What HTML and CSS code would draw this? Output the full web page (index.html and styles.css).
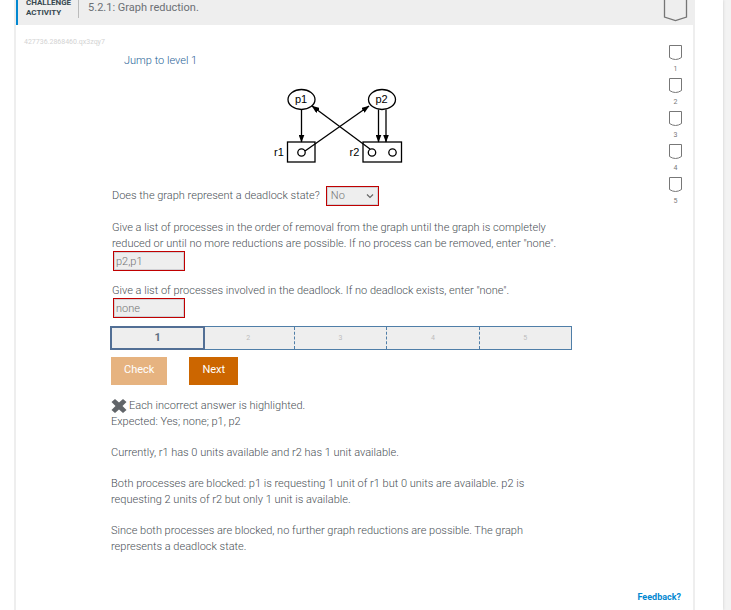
FILE: index.html
```html
<!DOCTYPE html>
<html lang="en">
<head>
<meta charset="utf-8">
<meta name="viewport" content="width=device-width, initial-scale=1">
<title>5.2.1: Graph reduction</title>
<link rel="stylesheet" href="styles.css">
</head>
<body>
<div class="page">
  <main class="card">
    <header class="card-header">
      <div class="kind">CHALLENGE<br>ACTIVITY</div>
      <h1 class="title">5.2.1: Graph reduction.</h1>
      <svg class="header-badge" width="25" height="22" viewBox="0 0 25 22" aria-hidden="true">
        <path d="M1.500 0V17L12.500 20.500L23.500 17V0" fill="#eee" stroke="#757575" stroke-width="1.300"/>
      </svg>
    </header>
    <div class="card-body">
      <section class="activity">
        <div class="activity-id">427736.2868460.qx3zqy7</div>
        <a class="jump" href="#level-1">Jump to level 1</a>
        <svg class="graph" width="132" height="80" viewBox="0 0 132 80" role="img" aria-label="Resource allocation graph">
          <defs>
            <marker id="arrow" viewBox="0 0 8 6" refX="7.500" refY="3" markerWidth="8" markerHeight="6" markerUnits="userSpaceOnUse" orient="auto"><path d="M0 0L8 3L0 6Z"/></marker>
          </defs>
          <g fill="none" stroke="#000" stroke-width="1.300">
            <ellipse cx="29.500" cy="13.500" rx="13.500" ry="10"/>
            <ellipse cx="110" cy="13.500" rx="13.500" ry="10"/>
            <rect x="15.500" y="56" width="27.500" height="20"/>
            <rect x="91" y="56" width="38.500" height="20"/>
            <circle cx="29.500" cy="66.500" r="3.700"/>
            <circle cx="100" cy="66.500" r="3.700"/>
            <circle cx="120.500" cy="66.500" r="3.700"/>
            <g marker-end="url(#arrow)">
              <path d="M29.500 23.500V56"/>
              <path d="M106.500 23.500V56"/>
              <path d="M114 23.500V56"/>
              <path d="M33 65L97 20"/>
              <path d="M98 63L40 20"/>
            </g>
          </g>
          <g class="graph-text">
            <text x="23" y="17">p1</text>
            <text x="103.500" y="17">p2</text>
            <text x="2" y="70">r1</text>
            <text x="77.500" y="70">r2</text>
          </g>
        </svg>
        <form class="questions">
          <div class="question-row">
            <label for="deadlock">Does the graph represent a deadlock state?</label>
            <span class="select-wrap">
              <select id="deadlock" disabled><option>No</option><option>Yes</option></select>
              <svg class="chevron" width="8" height="6" viewBox="0 0 8 6" aria-hidden="true"><path d="M1 1.500L4 4.500L7 1.500" fill="none" stroke="#666" stroke-width="1.200"/></svg>
            </span>
          </div>
          <div class="question">
            <label for="removal">Give a list of processes in the order of removal from the graph until the graph is completely reduced or until no more reductions are possible. If no process can be removed, enter "none".</label>
            <input id="removal" type="text" value="p2,p1" disabled>
          </div>
          <div class="question">
            <label for="involved">Give a list of processes involved in the deadlock. If no deadlock exists, enter "none".</label>
            <input id="involved" type="text" value="none" disabled>
          </div>
        </form>
        <ol class="progress">
          <li class="current">1</li><li>2</li><li>3</li><li>4</li><li>5</li>
        </ol>
        <div class="buttons">
          <button class="check" type="button" disabled>Check</button>
          <button type="button">Next</button>
        </div>
        <div class="explanation">
          <p><svg class="cross" width="16" height="16" viewBox="0 0 16 16" aria-hidden="true"><path d="M4 1L8 4.500L12 1L15.500 4L11.500 8L15.500 12L12 15L8 11.500L4 15L.5 12L4.500 8L.5 4Z" fill="#616569"/></svg>Each incorrect answer is highlighted.<br>Expected: Yes; none; p1, p2</p>
          <p>Currently, r1 has 0 units available and r2 has 1 unit available.</p>
          <p>Both processes are blocked: p1 is requesting 1 unit of r1 but 0 units are available. p2 is requesting 2 units of r2 but only 1 unit is available.</p>
          <p>Since both processes are blocked, no further graph reductions are possible. The graph represents a deadlock state.</p>
        </div>
      </section>
      <ol class="levels">
        <li><svg width="13" height="16" viewBox="0 0 13 16" aria-hidden="true"><path d="M.5 .5H12.500V12.500Q6.500 16.500 .5 12.500Z"/></svg>1</li>
        <li><svg width="13" height="16" viewBox="0 0 13 16" aria-hidden="true"><path d="M.5 .5H12.500V12.500Q6.500 16.500 .5 12.500Z"/></svg>2</li>
        <li><svg width="13" height="16" viewBox="0 0 13 16" aria-hidden="true"><path d="M.5 .5H12.500V12.500Q6.500 16.500 .5 12.500Z"/></svg>3</li>
        <li><svg width="13" height="16" viewBox="0 0 13 16" aria-hidden="true"><path d="M.5 .5H12.500V12.500Q6.500 16.500 .5 12.500Z"/></svg>4</li>
        <li><svg width="13" height="16" viewBox="0 0 13 16" aria-hidden="true"><path d="M.5 .5H12.500V12.500Q6.500 16.500 .5 12.500Z"/></svg>5</li>
      </ol>
    </div>
    <footer class="card-footer"><a href="#feedback">Feedback?</a></footer>
  </main>
</div>
</body>
</html>
```
FILE: styles.css
```css
* {
  box-sizing: border-box;
}

body {
  margin: 0;
  background: #f3f3f3;
  color: #4a5056;
  font: 300 11px/16px Roboto, sans-serif;
}

.page {
  min-height: 100vh;
  margin-right: 8px;
  padding: 0 28px 0 14px;
  background: #fff;
  box-shadow: 0 0 3px #ccc;
}

.card {
  display: flex;
  flex-direction: column;
  min-height: 100vh;
  border: solid #eee;
  border-width: 0 2px;
}

.card-header {
  display: flex;
  align-items: flex-end;
  height: 25px;
  overflow: hidden;
  background: #eee;
  border-left: 2px solid #0288d1;
}

.kind {
  margin-bottom: 7px;
  padding: 0 7px 0 8px;
  border-right: 1px solid #bbb;
  color: #37474f;
  font-size: 8px;
  font-weight: 700;
  line-height: 10px;
}

.title {
  flex: 1;
  margin: 0 0 9px 9px;
  font-size: 11px;
  font-weight: 400;
  line-height: 16px;
  color: #6c7075;
}

.header-badge {
  flex: none;
  align-self: flex-start;
  margin-right: 5px;
}

.card-body {
  display: flex;
  justify-content: space-between;
  flex: 1;
}

.activity {
  flex: 1;
  max-width: 556px;
  padding-left: 94px;
}

.activity-id {
  margin: 10px 0 4px -86px;
  color: #d3d3d3;
  font-size: 7px;
  font-weight: 400;
  line-height: 14px;
}

.jump {
  display: block;
  width: max-content;
  margin-left: 14px;
  color: #1f5f96;
  text-decoration: none;
}

.graph {
  display: block;
  margin: 17px auto 20px 162px;
}

.graph-text {
  font: 400 11px "Liberation Sans", sans-serif;
}

.questions {
  padding-left: 2px;
}

.question-row {
  display: flex;
  align-items: baseline;
  gap: 6px;
  margin-bottom: 14px;
}

.select-wrap {
  display: grid;
  align-items: center;
}

.select-wrap > * {
  grid-area: 1 / 1;
}

.chevron {
  justify-self: end;
  margin-right: 5px;
  pointer-events: none;
}

select,
input {
  height: 20px;
  margin: 0;
  padding: 0 2px;
  border: 1px solid #c00000;
  border-radius: 0;
  outline: 0;
  background: #eee;
  box-shadow: inset 0 0 0 1px #d0d0d4;
  color: #747474;
  font: inherit;
  opacity: 1;
}

select {
  appearance: none;
  width: 53px;
  padding-left: 4px;
}

.question + .question {
  margin-top: 12px;
}

.question label {
  display: block;
}

.question input {
  display: block;
  width: 72px;
  margin: -1px 0 0 1px;
}

.progress {
  display: flex;
  height: 24px;
  margin: 8px 0 0;
  padding: 0;
  border: 1px solid #4f7ea8;
  background: #eee;
  list-style: none;
}

.progress li {
  flex: 1;
  color: #bdbdbd;
  font-size: 7px;
  font-weight: 400;
  line-height: 22px;
  text-align: center;
}

.progress li + li + li {
  border-left: 1px dashed #4f7ea8;
}

.progress .current {
  margin: -1px -3px -1px -1px;
  border: 2px solid #526f95;
  color: #607080;
  font-size: 11px;
  font-weight: 700;
  line-height: 20px;
}

.buttons {
  display: flex;
  gap: 22px;
  margin: 7px 0 13px 1px;
}

button {
  height: 28px;
  padding: 0 13px 3px;
  border: 0;
  background: #cc6600;
  color: #fff;
  font: 400 11px/16px Roboto, sans-serif;
}

.check {
  background: #e6b380;
}

.explanation {
  margin-left: 1px;
  max-width: 440px;
}

.explanation p {
  margin: 0 0 15px;
}

.cross {
  margin-block: -2px;
  margin-right: 2px;
  vertical-align: middle;
}

.levels {
  margin: 20px 11px 0 0;
  padding: 0;
  list-style: none;
}

.levels li {
  display: flex;
  flex-direction: column;
  align-items: center;
  gap: 3px;
  margin-bottom: 4px;
  color: #777;
  font-size: 7px;
  font-weight: 400;
  line-height: 10px;
}

.levels path {
  fill: #fff;
  stroke: #777;
}

.card-footer {
  padding: 0 12px 5px 0;
  font-size: 9px;
  font-weight: 700;
  text-align: right;
}

.card-footer a {
  color: #0288d1;
  text-decoration: none;
}
```
